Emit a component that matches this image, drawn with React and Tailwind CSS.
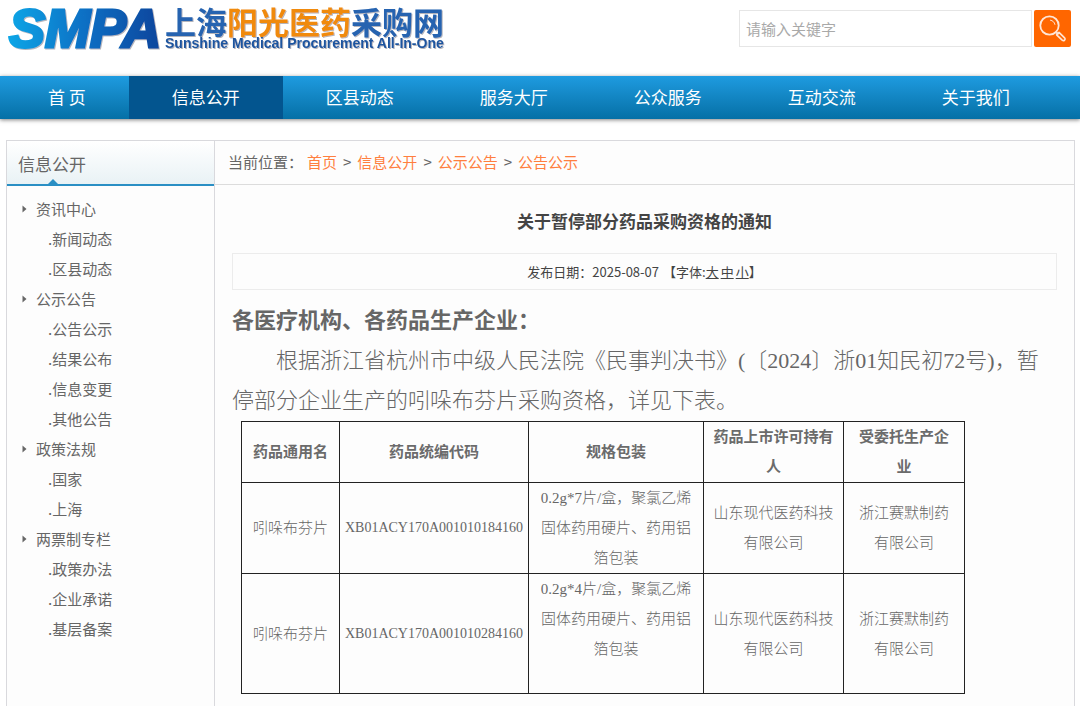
const NAV = ["信息公开", "区县动态", "服务大厅", "公众服务", "互动交流", "关于我们"];

const MENU = [
  { title: "资讯中心", items: ["新闻动态", "区县动态"] },
  { title: "公示公告", items: ["公告公示", "结果公布", "信息变更", "其他公告"] },
  { title: "政策法规", items: ["国家", "上海"] },
  { title: "两票制专栏", items: ["政策办法", "企业承诺", "基层备案"] },
];

const COLUMNS = [
  { lines: ["药品通用名"], width: "w-[98px]" },
  { lines: ["药品统编代码"], width: "w-[189px]" },
  { lines: ["规格包装"], width: "w-[175px]" },
  { lines: ["药品上市许可持有", "人"], width: "w-[140px]" },
  { lines: ["受委托生产企", "业"], width: "w-[121px]" },
];

const ROWS = [
  { code: "XB01ACY170A001010184160", spec: "0.2g*7片/盒，聚氯乙烯", height: "h-[91px]" },
  { code: "XB01ACY170A001010284160", spec: "0.2g*4片/盒，聚氯乙烯", height: "h-[120px]" },
];

function Lines({ lines }) {
  return lines.map((line) => (
    <span key={line} className="block whitespace-nowrap">
      {line}
    </span>
  ));
}

function Logo() {
  return (
    <a href="#" aria-label="上海阳光医药采购网" className="block shrink-0">
      <svg width="452" height="60" viewBox="0 0 452 60" className="block overflow-visible">
        <defs>
          <linearGradient id="smpa" x1="0" y1="0" x2="1" y2="0">
            <stop offset="0" stopColor="#0aa5e6" />
            <stop offset="0.5" stopColor="#0a6fc4" />
            <stop offset="1" stopColor="#0b459c" />
          </linearGradient>
          <filter id="soft" x="-5%" y="-10%" width="110%" height="130%">
            <feDropShadow dx="1" dy="1" stdDeviation="0.6" floodColor="#445" floodOpacity="0.4" />
          </filter>
        </defs>
        <g filter="url(#soft)">
          <text
            x="9"
            y="47"
            fontSize="54"
            fontWeight="700"
            fontStyle="italic"
            fill="url(#smpa)"
            stroke="url(#smpa)"
            strokeWidth="3"
            fontFamily="'Liberation Sans', Arial, sans-serif"
          >
            SMPA
          </text>
          <text
            x="165"
            y="34"
            fontSize="31"
            fontWeight="700"
            fill="#2563b0"
            fontFamily="'Noto Sans CJK SC', sans-serif"
          >
            上海<tspan fill="#f08a10">阳光医药</tspan>采购网
          </text>
          <text
            x="165"
            y="48"
            fontSize="14"
            fontWeight="700"
            fill="#1f559f"
            fontFamily="'Liberation Sans', Arial, sans-serif"
          >
            Sunshine Medical Procurement All-In-One
          </text>
        </g>
      </svg>
    </a>
  );
}

function Header() {
  return (
    <header className="flex h-[76px] items-start justify-between pr-[9px]">
      <Logo />
      <form className="flex gap-0.5 pt-[10px]" onSubmit={(e) => e.preventDefault()}>
        <input
          type="text"
          aria-label="关键字"
          placeholder="请输入关键字"
          className="h-[37px] w-[293px] border border-[#e6e6e6] bg-white px-1.5 text-[15px] text-[#555] outline-none placeholder:text-[#a9a9a9]"
        />
        <button
          type="submit"
          aria-label="搜索"
          className="flex size-[37px] items-center justify-center rounded-xs bg-[#ff6600]"
        >
          <svg width="29" height="29" viewBox="0 0 29 29" fill="none" stroke="#ffe6d6" strokeLinecap="round">
            <circle cx="11.5" cy="11.5" r="9.2" strokeWidth="1.8" />
            <path d="M12.5 6.2c2.4.5 4 2 4.4 4.2" strokeWidth="1" />
            <path d="M18.2 18.2l1.6 1.6" strokeWidth="2" />
            <path
              d="M18.6 20.8l2.4-2.4 5.6 5.4c.7.8.6 1.7 0 2.300s-1.600.8-2.400.1z"
              strokeWidth="1.6"
              strokeLinejoin="round"
            />
          </svg>
        </button>
      </form>
    </header>
  );
}

function Nav() {
  return (
    <nav className="flex h-[43px] bg-linear-to-b from-[#1e9be0] to-[#0570a6] text-[17px] text-white shadow-[0_1px_4px_rgba(0,0,0,0.5)]">
      <a href="#" className="flex items-center pr-[43px] pb-0.5 pl-12 whitespace-pre">
        首 页
      </a>
      {NAV.map((item, i) => (
        <a
          key={item}
          href="#"
          className={`flex items-center px-[43px] pb-0.5 whitespace-nowrap ${i === 0 ? "bg-[#03558f]" : ""}`}
        >
          {item}
        </a>
      ))}
    </nav>
  );
}

function Sidebar() {
  return (
    <aside className="w-[208px] shrink-0 border-r border-[#d9d9dd]">
      <h2 className="relative flex h-[45px] items-center border-b-2 border-[#2a8fc4] bg-linear-to-b from-white to-[#e9f2f5] pt-0.5 pl-[11px] text-[17px] text-[#666]">
        信息公开
        <svg width="10" height="5" viewBox="0 0 10 5" className="absolute bottom-0 left-[41px]">
          <path d="M0 5l5-5 5 5z" fill="#2a8fc4" />
        </svg>
      </h2>
      <ul className="pt-2 text-[15px] leading-[30px] text-[#666]">
        {MENU.map((group) => (
          <li key={group.title}>
            <a href="#" className="flex items-center gap-[9px] pl-[15px]">
              <svg width="5" height="8" viewBox="0 0 5 8">
                <path d="M0.5 0.5L4.5 4L0.5 7.5z" fill="#666" />
              </svg>
              {group.title}
            </a>
            <ul>
              {group.items.map((item) => (
                <li key={item} className="pl-[41px]">
                  <a href="#">.{item}</a>
                </li>
              ))}
            </ul>
          </li>
        ))}
      </ul>
    </aside>
  );
}

function Breadcrumb() {
  const path = ["首页", "信息公开", "公示公告", "公告公示"];
  return (
    <div className="flex h-11 items-center border-b border-[#dcdcdc] pl-[13px] text-[15px] text-[#666]">
      <span className="mr-1">当前位置：</span>
      {path.map((item, i) => (
        <span key={item} className="flex">
          {i > 0 && <span className="px-1.5">&gt;</span>}
          <a href="#" className="text-[#ff7f3f]">
            {item}
          </a>
        </span>
      ))}
    </div>
  );
}

function DrugTable() {
  return (
    <table className="ml-[9px] table-fixed border-collapse text-center text-[15px] leading-[30px] text-[#666]">
      <thead>
        <tr className="h-[61px]">
          {COLUMNS.map((col) => (
            <th key={col.lines[0]} className={`border border-[#222] p-0 font-bold text-[#6b6b6b] ${col.width}`}>
              <Lines lines={col.lines} />
            </th>
          ))}
        </tr>
      </thead>
      <tbody className="font-light">
        {ROWS.map((row) => (
          <tr key={row.code} className={row.height}>
            <td className="border border-[#222] p-0">吲哚布芬片</td>
            <td className="border border-[#222] p-0 text-sm font-normal">{row.code}</td>
            <td className="border border-[#222] p-0 align-top">
              <Lines lines={[row.spec, "固体药用硬片、药用铝", "箔包装"]} />
            </td>
            <td className="border border-[#222] p-0">
              <Lines lines={["山东现代医药科技", "有限公司"]} />
            </td>
            <td className="border border-[#222] p-0">
              <Lines lines={["浙江赛默制药", "有限公司"]} />
            </td>
          </tr>
        ))}
      </tbody>
    </table>
  );
}

function Article() {
  return (
    <article className="px-[17px] pb-3">
      <h1 className="pt-[21px] text-center text-[17px] leading-[30px] font-bold text-[#444]">
        关于暂停部分药品采购资格的通知
      </h1>
      <div className="mt-[17px] flex h-[37px] items-center justify-center border border-[#ececec] text-[13px] text-[#444]">
        <span>发布日期：2025-08-07</span>
        <span className="ml-1">【字体:</span>
        <span className="flex gap-0.5">
          <a href="#" className="underline">大</a>
          <a href="#" className="underline">中</a>
          <a href="#" className="underline">小</a>
        </span>
        <span>】</span>
      </div>
      <div className="pt-[11px] font-['Liberation_Serif','Noto_Sans_CJK_SC',serif] text-[#666] [text-spacing-trim:space-all]">
        <p className="text-[22px] leading-10 font-bold">各医疗机构、各药品生产企业：</p>
        <p className="indent-[2em] text-[22px] leading-10 font-light text-[#666]">
          根据浙江省杭州市中级人民法院《民事判决书》(〔2024〕浙01知民初72号)，暂
          <br />
          停部分企业生产的吲哚布芬片采购资格，详见下表。
        </p>
        <DrugTable />
      </div>
    </article>
  );
}

export default function App() {
  return (
    <div lang="zh-CN" className="min-h-screen bg-white font-['Noto_Sans_CJK_SC',sans-serif]">
      <Header />
      <Nav />
      <main className="mt-[21px] mr-[5px] ml-1.5 flex border border-[#d9d9dd] bg-[#fdfdfd]">
        <Sidebar />
        <section className="min-w-0 flex-1">
          <Breadcrumb />
          <Article />
        </section>
      </main>
    </div>
  );
}
